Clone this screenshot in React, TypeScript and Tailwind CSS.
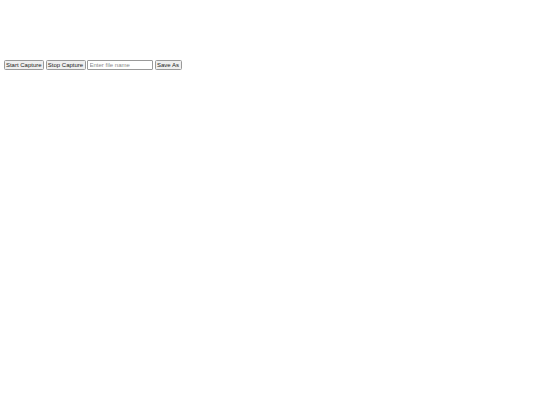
import React from "react";

export default function App() {
  const btn =
    "h-[10px] box-border flex items-center justify-center whitespace-nowrap p-0 rounded-[1.5px] border-[0.5px] border-[#9a9a9a] bg-[#efefef] text-[6px] leading-none text-[#222]";
  return (
    <div className="w-[540px] h-[405px] bg-white font-['Liberation_Sans',Arial,sans-serif]">
      <div className="flex items-center gap-[1.5px] pt-[60px] pl-[3.5px]">
        <button className={`${btn} w-[40.5px]`}>Start Capture</button>
        <button className={`${btn} w-[40px]`}>Stop Capture</button>
        <input
          className="h-[10px] w-[66px] box-border rounded-[1px] border-[0.5px] border-[#9a9a9a] bg-white px-[1.5px] text-[6px] leading-none text-black placeholder:text-[#8a8a8a] outline-none"
          placeholder="Enter file name"
        />
        <button className={`${btn} w-[27px]`}>Save As</button>
      </div>
    </div>
  );
}
